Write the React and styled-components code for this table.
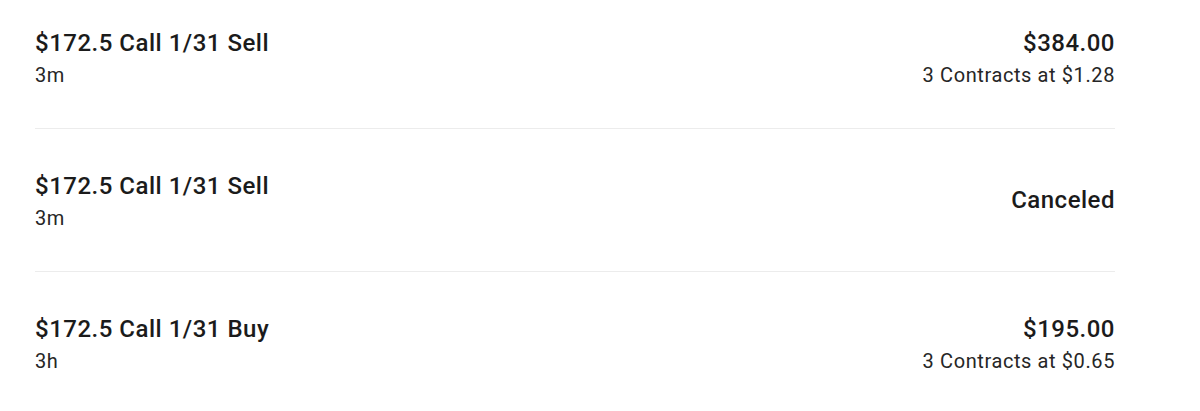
import React from "react";
import styled, { createGlobalStyle } from "styled-components";

const GlobalStyle = createGlobalStyle`
  body {
    margin: 0;
    background: #ffffff;
    font-family: Roboto, "Noto Sans", sans-serif;
    color: #1e1e1e;
  }
`;

const List = styled.div`
  display: flex;
  flex-direction: column;
  padding: 0 85px 0 35px;
`;

const Row = styled.div`
  display: flex;
  justify-content: space-between;
  align-items: center;
  padding: 41px 0;
  border-bottom: 1px solid #ececec;

  &:first-child {
    padding-top: 27px;
  }

  &:last-child {
    border-bottom: none;
  }
`;

const Side = styled.div`
  display: flex;
  flex-direction: column;
  align-items: ${({ $right }) => ($right ? "flex-end" : "flex-start")};
`;

const Title = styled.div`
  font-size: 24px;
  font-weight: 500;
  line-height: 32px;
  letter-spacing: 0.5px;
  color: #1b1b1b;
`;

const Sub = styled.div`
  margin-top: 4px;
  font-size: 20px;
  line-height: 24px;
  letter-spacing: 0.6px;
  color: #262626;
`;

const orders = [
  { name: "$172.5 Call 1/31 Sell", time: "3m", amount: "$384.00", detail: "3 Contracts at $1.28" },
  { name: "$172.5 Call 1/31 Sell", time: "3m", amount: "Canceled" },
  { name: "$172.5 Call 1/31 Buy", time: "3h", amount: "$195.00", detail: "3 Contracts at $0.65" },
];

const App = () => {
  return (
    <>
      <GlobalStyle />
      <List>
        {orders.map((o, i) => (
          <Row key={i}>
            <Side>
              <Title>{o.name}</Title>
              <Sub>{o.time}</Sub>
            </Side>
            <Side $right>
              <Title>{o.amount}</Title>
              {o.detail && <Sub>{o.detail}</Sub>}
            </Side>
          </Row>
        ))}
      </List>
    </>
  );
};

export default App;
